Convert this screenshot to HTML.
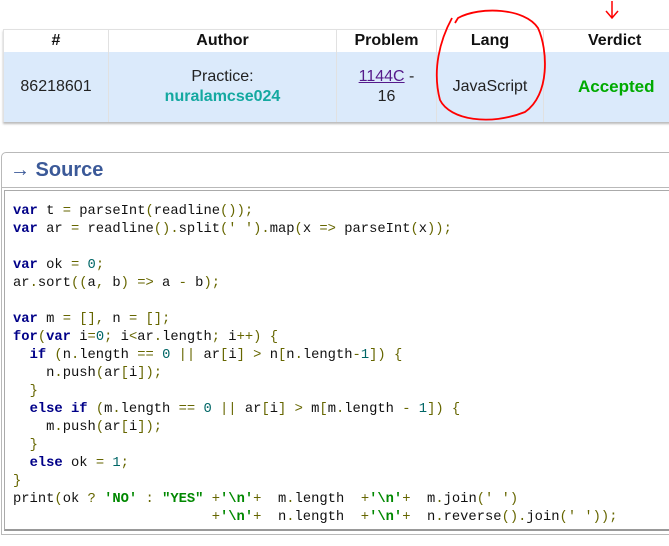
<!DOCTYPE html>
<html><head><style>
body{margin:0;width:669px;height:546px;background:#fff;overflow:hidden;position:relative;font-family:"Liberation Sans","DejaVu Sans",sans-serif}
table{position:absolute;left:3px;top:29px;border-collapse:collapse;width:700px;table-layout:fixed;box-shadow:0 2px 2px #bbb}
td,th{border-left:1px solid #e1e1e1;text-align:center;padding:0}
th{height:22px;font-size:16px;font-weight:bold;color:#111;background:#fff;border-top:1px solid #e1e1e1}
td{height:70px;background:#dbeafb;font-size:16px;color:#222;line-height:20px}
.src{position:absolute;left:1px;top:152px;width:680px;height:381px;border:1px solid #b9b9b9;border-radius:5px 0 0 0}
.src h2{margin:0;height:34px;line-height:34px;padding-left:8px;font-size:20px;color:#3b5998;font-weight:bold;border-bottom:1px solid #b9b9b9}
pre{position:absolute;left:2px;top:37px;width:680px;height:341px;margin:0;border:1px solid #aaa;border-bottom:2px solid #999;padding:12px 0 0 8px;box-sizing:border-box;font-family:"Liberation Mono","DejaVu Sans Mono",monospace;font-size:13.8px;line-height:18px;color:#111}
.k{color:#008;font-weight:bold}.p{color:#660}.s{color:#080;font-weight:bold}.n{color:#066}
</style></head><body>
<table><colgroup><col style="width:105px"><col style="width:228px"><col style="width:100px"><col style="width:107px"><col></colgroup>
<tr><th>#</th><th>Author</th><th>Problem</th><th>Lang</th><th style="text-align:left;padding-left:44px">Verdict</th></tr>
<tr><td>86218601</td><td>Practice:<br><b style="color:#14a8a0">nuralamcse024</b></td><td><span style="color:#551a8b;text-decoration:underline">1144C</span> -<br>16</td><td>JavaScript</td><td style="color:#0a0;font-weight:bold;font-size:17px;text-align:left;padding-left:34px">Accepted</td></tr></table>
<svg style="position:absolute;left:0;top:0" width="669" height="130"><path d="M452 18 C440 40 432 70 440 100 C450 120 490 126 525 112 C550 95 548 50 538 28 C525 8 480 6 458 18 L455 23" fill="none" stroke="#f00" stroke-width="1.8"/><path d="M612 1 V18 M606 11 L612 18 L618 11" fill="none" stroke="#f00" stroke-width="1.5"/></svg>
<div class="src"><h2><span style="font-weight:normal">→</span> Source</h2>
<pre><span class="k">var</span> t <span class="p">=</span> parseInt<span class="p">(</span>readline<span class="p">());</span>
<span class="k">var</span> ar <span class="p">=</span> readline<span class="p">().</span>split<span class="p">(</span><span class="p">' '</span><span class="p">).</span>map<span class="p">(</span>x <span class="p">=&gt;</span> parseInt<span class="p">(</span>x<span class="p">));</span>

<span class="k">var</span> ok <span class="p">=</span> <span class="n">0</span><span class="p">;</span>
ar<span class="p">.</span>sort<span class="p">((</span>a<span class="p">,</span> b<span class="p">)</span> <span class="p">=&gt;</span> a <span class="p">-</span> b<span class="p">);</span>

<span class="k">var</span> m <span class="p">=</span> <span class="p">[],</span> n <span class="p">=</span> <span class="p">[];</span>
<span class="k">for</span><span class="p">(</span><span class="k">var</span> i<span class="p">=</span><span class="n">0</span><span class="p">;</span> i<span class="p">&lt;</span>ar<span class="p">.</span>length<span class="p">;</span> i<span class="p">++)</span> <span class="p">{</span>
  <span class="k">if</span> <span class="p">(</span>n<span class="p">.</span>length <span class="p">==</span> <span class="n">0</span> <span class="p">||</span> ar<span class="p">[</span>i<span class="p">]</span> <span class="p">&gt;</span> n<span class="p">[</span>n<span class="p">.</span>length<span class="p">-</span><span class="n">1</span><span class="p">])</span> <span class="p">{</span>
    n<span class="p">.</span>push<span class="p">(</span>ar<span class="p">[</span>i<span class="p">]);</span>
  <span class="p">}</span>
  <span class="k">else</span> <span class="k">if</span> <span class="p">(</span>m<span class="p">.</span>length <span class="p">==</span> <span class="n">0</span> <span class="p">||</span> ar<span class="p">[</span>i<span class="p">]</span> <span class="p">&gt;</span> m<span class="p">[</span>m<span class="p">.</span>length <span class="p">-</span> <span class="n">1</span><span class="p">])</span> <span class="p">{</span>
    m<span class="p">.</span>push<span class="p">(</span>ar<span class="p">[</span>i<span class="p">]);</span>
  <span class="p">}</span>
  <span class="k">else</span> ok <span class="p">=</span> <span class="n">1</span><span class="p">;</span>
<span class="p">}</span>
print<span class="p">(</span>ok <span class="p">?</span> <span class="s">'NO'</span> <span class="p">:</span> <span class="s">"YES"</span> <span class="p">+</span><span class="s">'\n'</span><span class="p">+</span>  m<span class="p">.</span>length  <span class="p">+</span><span class="s">'\n'</span><span class="p">+</span>  m<span class="p">.</span>join<span class="p">(</span><span class="p">' '</span><span class="p">)</span>
                        <span class="p">+</span><span class="s">'\n'</span><span class="p">+</span>  n<span class="p">.</span>length  <span class="p">+</span><span class="s">'\n'</span><span class="p">+</span>  n<span class="p">.</span>reverse<span class="p">().</span>join<span class="p">(</span><span class="p">' '</span><span class="p">));</span></pre>
</div>
</body></html>
